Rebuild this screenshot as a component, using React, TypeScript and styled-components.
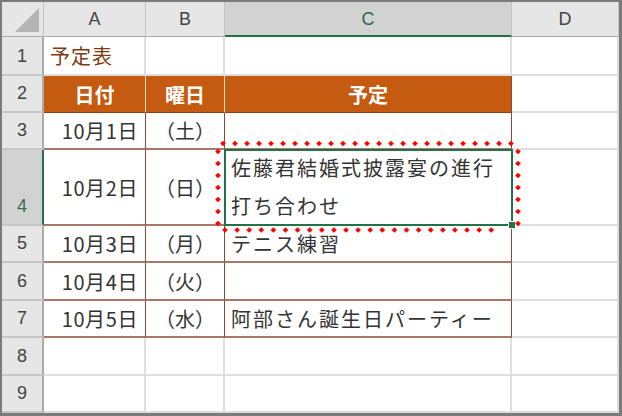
import styled, { createGlobalStyle } from "styled-components";

const GlobalStyle = createGlobalStyle`
  body {
    margin: 0;
    background: #ffffff;
  }
`;

type Align = "left" | "center" | "right";
type Kind = "plain" | "table" | "head";

const GREEN = "#217346";
const GRID = "#dedede";
const BROWN_V = "#8e4a2c";
const BROWN_H = "#a9786a";

const rows: { date: string; dow: string; plan: string[] }[] = [
  { date: "10月1日", dow: "（土）", plan: [] },
  { date: "10月2日", dow: "（日）", plan: ["佐藤君結婚式披露宴の進行", "打ち合わせ"] },
  { date: "10月3日", dow: "（月）", plan: ["テニス練習"] },
  { date: "10月4日", dow: "（火）", plan: [] },
  { date: "10月5日", dow: "（水）", plan: ["阿部さん誕生日パーティー"] },
];

// dots of the copy marquee round C4, in cell coordinates shifted by 12
const antDots = (() => {
  const pts: [number, number][] = [];
  for (let x = -2; x <= 287; x += 12) pts.push([x, -6.5]);
  for (let y = 1.5; y <= 74; y += 12) {
    pts.push([-7, y]);
    pts.push([293, y]);
  }
  for (let x = 0; x <= 278; x += 12.1) pts.push([x, 80]);
  return pts;
})();

function App() {
  return (
    <>
      <GlobalStyle />
      <Sheet>
        <Corner>
          <CornerTriangle />
        </Corner>
        {["A", "B", "C", "D"].map((c) => (
          <ColHeader key={c} $selected={c === "C"}>
            {c}
          </ColHeader>
        ))}

        <RowHeader>1</RowHeader>
        <Cell $align="left" $color="#7e3a10">
          <Spaced>予定表</Spaced>
        </Cell>
        <Cell />
        <Cell />
        <Cell />

        <RowHeader>2</RowHeader>
        <Cell $kind="head" $align="center">日付</Cell>
        <Cell $kind="head" $align="center">曜日</Cell>
        <Cell $kind="head" $align="center" $lastCol>
          予定
        </Cell>
        <Cell />

        {rows.map((r, i) => {
          const n = i + 3;
          const selected = n === 4;
          return [
            <RowHeader key={`h${n}`} $selected={selected}>
              {n}
            </RowHeader>,
            <Cell key={`a${n}`} $kind="table" $align="right">
              <DateText>{r.date}</DateText>
            </Cell>,
            <Cell key={`b${n}`} $kind="table" $align="center">
              {r.dow}
            </Cell>,
            <Cell key={`c${n}`} $kind="table" $align="left" $active={selected}>
              <PlanText>
                {r.plan.map((line, j) => (
                  <span key={j}>
                    {j > 0 && <br />}
                    {line}
                  </span>
                ))}
              </PlanText>
              {selected && (
                <>
                  <SelectionBox />
                  <FillHandle />
                  <Marquee width={311} height={100} viewBox="0 0 311 100">
                    {antDots.map(([x, y], k) => (
                      <rect
                        key={k}
                        x={x + 12 - 2}
                        y={y + 12 - 2}
                        width={4}
                        height={4}
                        fill="#ff0000"
                        transform={`rotate(45 ${x + 12} ${y + 12})`}
                      />
                    ))}
                  </Marquee>
                </>
              )}
            </Cell>,
            <Cell key={`d${n}`} />,
          ];
        })}

        {[8, 9].map((n) => [
          <RowHeader key={`h${n}`}>{n}</RowHeader>,
          <Cell key={`a${n}`} />,
          <Cell key={`b${n}`} />,
          <Cell key={`c${n}`} />,
          <Cell key={`d${n}`} />,
        ])}
      </Sheet>
    </>
  );
}

export default App;

const Sheet = styled.div`
  width: 622px;
  height: 416px;
  box-sizing: border-box;
  border: 2px solid #7b7b7b;
  border-right-width: 3px;
  border-bottom-width: 3px;
  display: grid;
  grid-template-columns: 42px 102px 79px 287px 1fr;
  grid-template-rows: 35px 39px 37px 37px 76px 37px 38px 37px 38px 1fr;
  background: #ffffff;
  font-family: "Noto Sans CJK JP", "Noto Sans", sans-serif;
  overflow: hidden;
`;

const Corner = styled.div`
  position: relative;
  background: #e6e6e6;
  border-right: 1px solid #c4c4c4;
  border-bottom: 1px solid #ababab;
`;

const CornerTriangle = styled.div`
  position: absolute;
  right: 4px;
  bottom: 4px;
  width: 0;
  height: 0;
  border-left: 24px solid transparent;
  border-bottom: 24px solid #b4b4b4;
`;

const ColHeader = styled.div<{ $selected?: boolean }>`
  display: flex;
  align-items: center;
  justify-content: center;
  box-sizing: border-box;
  background: ${({ $selected }) => ($selected ? "#d2d2d2" : "#e6e6e6")};
  border-right: 1px solid #c4c4c4;
  border-bottom: ${({ $selected }) =>
    $selected ? `2px solid ${GREEN}` : "1px solid #ababab"};
  font-family: "Liberation Sans", Arial, sans-serif;
  font-size: 18px;
  color: ${({ $selected }) => ($selected ? "#2c6a48" : "#444444")};
  padding-top: 1px;
`;

const RowHeader = styled.div<{ $selected?: boolean }>`
  display: flex;
  align-items: flex-end;
  justify-content: center;
  box-sizing: border-box;
  padding-bottom: 9px;
  line-height: 18px;
  background: ${({ $selected }) => ($selected ? "#d2d2d2" : "#e6e6e6")};
  border-right: ${({ $selected }) =>
    $selected ? `2px solid ${GREEN}` : "2px solid #acacac"};
  border-bottom: 2px solid #c6c6c6;
  font-family: "Liberation Sans", Arial, sans-serif;
  font-size: 18px;
  color: ${({ $selected }) => ($selected ? "#3b6b50" : "#444444")};
`;

const Cell = styled.div<{
  $kind?: Kind;
  $align?: Align;
  $color?: string;
  $lastCol?: boolean;
  $active?: boolean;
}>`
  position: ${({ $active }) => ($active ? "relative" : "static")};
  z-index: ${({ $active }) => ($active ? 3 : "auto")};
  display: flex;
  align-items: center;
  justify-content: ${({ $align }) =>
    $align === "right" ? "flex-end" : $align === "center" ? "center" : "flex-start"};
  box-sizing: border-box;
  padding: ${({ $align }) =>
    $align === "right" ? "0 7px 0 0" : $align === "left" ? "0 0 0 6px" : "0"};
  font-size: 20px;
  white-space: nowrap;
  color: ${({ $kind, $color }) =>
    $kind === "head" ? "#ffffff" : $color ?? "#333333"};
  font-weight: ${({ $kind }) => ($kind === "head" ? 700 : 400)};
  background: ${({ $kind }) => ($kind === "head" ? "#c55a11" : "#ffffff")};
  border-right: ${({ $kind, $lastCol }) =>
    $kind === "table"
      ? `1.5px solid ${BROWN_V}`
      : $kind === "head"
      ? $lastCol
        ? `1.5px solid ${BROWN_V}`
        : "1px solid #f4ddd0"
      : `2px solid ${GRID}`};
  border-bottom: ${({ $kind }) =>
    $kind === "table"
      ? `2px solid ${BROWN_H}`
      : $kind === "head"
      ? `1.5px solid #8b3e12`
      : `2px solid ${GRID}`};
`;

const Spaced = styled.span`
  letter-spacing: 1px;
`;

const DateText = styled.span`
  letter-spacing: 0.6px;
`;

const PlanText = styled.div`
  line-height: 38px;
  letter-spacing: 2px;
`;

const SelectionBox = styled.div`
  position: absolute;
  left: -1px;
  top: -1px;
  right: -2px;
  bottom: -2px;
  border: 2px solid ${GREEN};
  pointer-events: none;
`;

const FillHandle = styled.div`
  position: absolute;
  right: -5px;
  bottom: -5px;
  width: 6px;
  height: 6px;
  background: ${GREEN};
  border: 1px solid #ffffff;
`;

const Marquee = styled.svg`
  position: absolute;
  left: -12px;
  top: -12px;
  overflow: visible;
  pointer-events: none;
`;
